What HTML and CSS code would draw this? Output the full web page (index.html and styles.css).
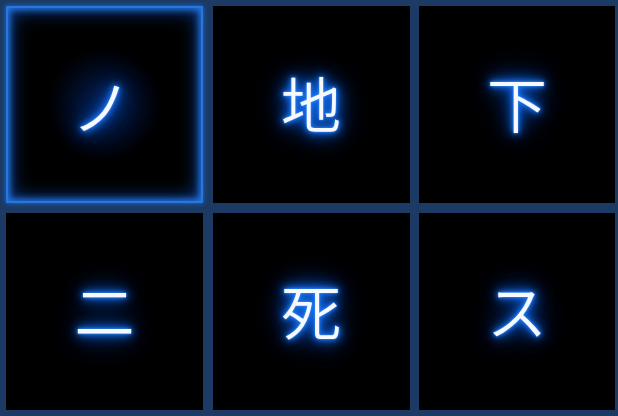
FILE: index.html
```html
<!DOCTYPE html>
<html lang="ja">
<head>
<meta charset="utf-8">
<link rel="stylesheet" href="styles.css">
</head>
<body>
<div class="grid">
  <div class="cell active"><span class="kana">ノ</span></div>
  <div class="cell"><span class="kana">地</span></div>
  <div class="cell"><span class="kana">下</span></div>
  <div class="cell"><span class="kana">二</span></div>
  <div class="cell"><span class="kana">死</span></div>
  <div class="cell"><span class="kana">ス</span></div>
</div>
</body>
</html>
```
FILE: styles.css
```css
html, body {
  margin: 0;
  padding: 0;
  background: #1b3a64;
  width: 618px;
  height: 416px;
  overflow: hidden;
}
.grid {
  display: grid;
  grid-template-columns: 197px 197px 196px;
  grid-template-rows: 197px 197px;
  gap: 9.5px;
  padding: 6px 3px 6px 6px;
}
.cell {
  background: #000;
  display: flex;
  align-items: center;
  justify-content: center;
  box-sizing: border-box;
}
.cell.active {
  border: 2px solid #2478e0;
  box-shadow: inset 0 0 6px 2px rgba(40, 130, 250, 0.85), inset 0 0 18px 4px rgba(20, 100, 230, 0.55), 0 0 5px rgba(40, 130, 255, 0.7);
  background: radial-gradient(circle at 50% 50%, rgba(10, 45, 120, 0.6) 0, rgba(0, 0, 0, 0) 42%), #000;
}
.kana {
  font-family: "Noto Sans CJK JP", "Noto Sans CJK SC", sans-serif;
  font-size: 60px;
  font-weight: 350;
  line-height: 1;
  color: #f6f9ff;
  margin-top: -5px;
  text-shadow: 0 0 2px #4a9cff, 0 0 5px #1f7cff, 0 0 9px #1a78ff, 0 0 14px #1470ff, 0 0 22px #0a5ef0, 0 0 32px #0650d8;
}
.active .kana {
  margin-left: -6px;
  margin-top: -2px;
  text-shadow: 0 0 2px #4a9cff, 0 0 6px #1f7cff, 0 0 10px #1a78ff, 0 0 16px #1470ff, 0 0 26px #0a5ef0, 0 0 40px #0650d8;
}
```
